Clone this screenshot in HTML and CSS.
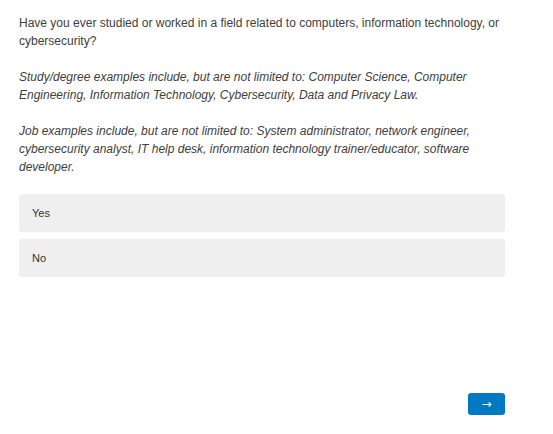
FILE: index.html
```html
<!DOCTYPE html>
<html>
<head>
<meta charset="utf-8">
<link rel="stylesheet" href="styles.css">
</head>
<body>
<div class="page">
  <div class="question">
    <p>Have you ever studied or worked in a field related to computers, information technology, or cybersecurity?</p>
    <p class="note">Study/degree examples include, but are not limited to: Computer Science, Computer Engineering, Information Technology, Cybersecurity, Data and Privacy Law.</p>
    <p class="note">Job examples include, but are not limited to: System administrator, network engineer, cybersecurity analyst, IT help desk, information technology trainer/educator, software developer.</p>
  </div>
  <div class="options">
    <div class="option">Yes</div>
    <div class="option">No</div>
  </div>
  <div class="footer">
    <button class="next">&rarr;</button>
  </div>
</div>
</body>
</html>
```
FILE: styles.css
```css
html, body {
  margin: 0;
  padding: 0;
  background: #fff;
}
.page {
  width: 486px;
  margin-left: 19px;
  padding-top: 14px;
  font-family: "Liberation Sans", Arial, sans-serif;
  color: #404040;
}
.question p {
  margin: 0 0 18px 0;
  font-size: 12px;
  line-height: 18px;
}
.question .note {
  font-style: italic;
}
.options {
  display: flex;
  flex-direction: column;
  gap: 7px;
  margin-top: 6px;
}
.option {
  background: #efefef;
  border-radius: 3px;
  height: 38px;
  display: flex;
  align-items: center;
  padding-left: 13px;
  font-size: 11px;
  color: #333;
}
.footer {
  display: flex;
  justify-content: flex-end;
  margin-top: 116px;
}
.next {
  width: 37px;
  height: 22px;
  border: none;
  border-radius: 3px;
  background: #0079c2;
  color: #fff;
  font-size: 12px;
  font-family: "DejaVu Sans", sans-serif;
  padding: 0;
  line-height: 22px;
}
```
